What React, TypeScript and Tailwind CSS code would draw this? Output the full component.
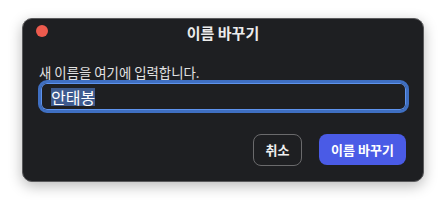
import React from "react";

export default function App() {
  return (
    <div
      className="w-[446px] h-[209px] bg-white pt-[18px] pl-[22px]"
      style={{ fontFamily: '"Noto Sans CJK KR", "Noto Sans", sans-serif' }}
    >
      <div className="w-[402px] h-[164px] rounded-[10px] bg-[#1e1f22] border border-[#5a5a5c] shadow-[0_4px_14px_rgba(0,0,0,0.28)] flex flex-col">
        <div className="relative h-[26px] flex items-center justify-center">
          <div className="absolute left-[13px] top-[6px] w-[12px] h-[12px] rounded-full bg-[#ed5b4e]" />
          <span className="text-[15px] font-bold text-[#ececec] leading-none">이름 바꾸기</span>
        </div>
        <div className="mt-[19px] pl-[16px] text-[13.4px] leading-[16px] text-[#e2e2e2]">
          새 이름을 여기에 입력합니다.
        </div>
        <div className="mt-[0px] ml-[15px] w-[371px] h-[33px] rounded-[9px] border-[3px] border-[#3f6fc2] shadow-[inset_0_0_0_1px_#5e93ee] flex items-center pl-[10px]">
          <span className="bg-[#3e5a8e] text-[16px] leading-[18px] text-white">안태봉</span>
        </div>
        <div className="mt-[21px] pr-[17px] flex justify-end gap-[17px]">
          <div className="w-[49px] h-[32px] rounded-[8px] border border-[#6a6a6c] flex items-center justify-center text-[13px] font-bold text-[#f0f0f0]">
            취소
          </div>
          <div className="w-[87px] h-[31px] rounded-[8px] bg-[#4a5be6] flex items-center justify-center text-[13px] font-bold text-white">
            이름 바꾸기
          </div>
        </div>
      </div>
    </div>
  );
}
